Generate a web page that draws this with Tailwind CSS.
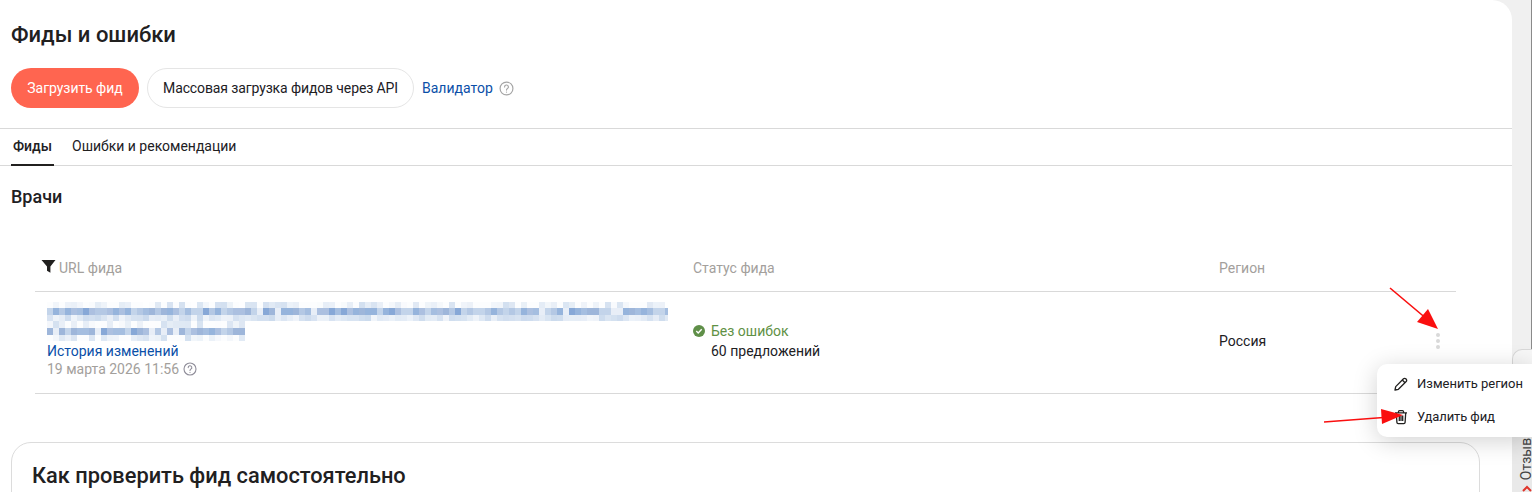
<!DOCTYPE html>
<html lang="ru">
<head>
<meta charset="utf-8">
<script src="https://cdn.jsdelivr.net/npm/@tailwindcss/browser@4"></script>
</head>
<body class="m-0 overflow-hidden bg-[#f0f0f0]">
<div class="relative flex h-[492px] w-[1532px] overflow-hidden font-['Roboto','Noto_Sans',sans-serif] text-[#21201f]">
  <main class="h-[492px] w-[1512px] shrink-0 rounded-tr-[20px] bg-white">
    <h1 class="pl-[11px] pt-[21px] text-[22px] font-medium leading-[27px]">Фиды и ошибки</h1>
    <div class="mt-[20px] flex h-[40px] items-center pl-[11px]">
      <button class="h-[40px] w-[128px] rounded-full bg-[#ff6550] text-[14px] tracking-[-0.05px] text-white">Загрузить фид</button>
      <button class="ml-[8px] h-[40px] w-[267px] rounded-full border border-[#e5e5e5] bg-white text-[14px] tracking-[-0.12px]">Массовая загрузка фидов через API</button>
      <a class="ml-[8px] text-[14px] text-[#0a4fa8]">Валидатор</a>
      <svg class="ml-[6px] h-[15px] w-[15px]" viewBox="0 0 14 14" fill="none" stroke="#a5a5a5" stroke-width="1.1"><circle cx="7" cy="7" r="6"/><path d="M5.2 5.6a1.8 1.8 0 1 1 2.7 1.5c-.6.4-.9.7-.9 1.4" stroke-linecap="round"/><circle cx="7" cy="10.3" r=".6" fill="#a5a5a5" stroke="none"/></svg>
    </div>
    <div class="mt-[20px] flex h-[38px] border-y border-[#d9d9d9] pl-[11px] text-[14px]">
      <div class="flex h-[37px] w-[43px] items-center justify-center border-b-2 border-[#21201f] pb-[1px] font-medium">Фиды</div>
      <div class="ml-[18px] flex h-[35px] items-center">Ошибки и рекомендации</div>
    </div>
    <h2 class="pl-[11px] pt-[19px] text-[18px] font-medium leading-[24px]">Врачи</h2>
    <section class="ml-[35px] mt-[34px] w-[1421px]">
      <div class="flex h-[49px] items-center border-b border-[#d9d9d9] pt-[2px] text-[14px] text-[#a3a09c]">
        <div class="flex w-[658px] items-center pl-[6px]">
          <svg class="mb-[4px] mr-[3px] h-[15px] w-[15px]" viewBox="0 0 15 15" fill="#21201f"><path d="M0.5 1h14L9.4 7.6v6.2L6 11.8V7.6z"/></svg>
          URL фида
        </div>
        <div class="w-[526px]">Статус фида</div>
        <div>Регион</div>
      </div>
      <div class="flex h-[102px] items-start border-b border-[#d9d9d9] text-[14px]">
        <div class="w-[658px] pl-[12px] pt-[10px]">
          <svg id="blur" class="block h-[40px] w-[621px]" viewBox="0 0 621 40" shape-rendering="crispEdges"></svg>
          <a class="block leading-[18px] text-[#0a4fa8]">История изменений</a>
          <div class="flex items-center leading-[18px] text-[#a3a09c]">19 марта 2026 11:56
            <svg class="ml-[4px] h-[14px] w-[14px]" viewBox="0 0 14 14" fill="none" stroke="#8f8d99" stroke-width="1.1"><circle cx="7" cy="7" r="6"/><path d="M5.2 5.6a1.8 1.8 0 1 1 2.7 1.5c-.6.4-.9.7-.9 1.4" stroke-linecap="round"/><circle cx="7" cy="10.3" r=".6" fill="#8f8d99" stroke="none"/></svg>
          </div>
        </div>
        <div class="w-[526px] pt-[29px] leading-[20px]">
          <div class="flex items-center text-[#5f9145]">
            <svg class="mr-[6px] h-[12px] w-[12px]" viewBox="0 0 12 12"><circle cx="6" cy="6" r="6" fill="#5f8f48"/><path d="M3.3 6.1l1.9 1.9 3.5-3.7" fill="none" stroke="#fff" stroke-width="1.4"/></svg>
            Без ошибок
          </div>
          <div class="pl-[18px]">60 предложений</div>
        </div>
        <div class="w-[217px] pt-[39px] leading-[20px]">Россия</div>
        <div class="flex flex-col gap-[2px] pt-[41px]">
          <span class="h-[4px] w-[4px] rounded-full bg-[#d9d9d9]"></span>
          <span class="h-[4px] w-[4px] rounded-full bg-[#d9d9d9]"></span>
          <span class="h-[4px] w-[4px] rounded-full bg-[#d9d9d9]"></span>
        </div>
      </div>
    </section>
    <section class="ml-[11px] mt-[48px] h-[80px] w-[1469px] rounded-t-[20px] border border-[#dcdcdc] px-[20px] pt-[19px]">
      <h3 class="text-[21.8px] font-medium leading-[28px]">Как проверить фид самостоятельно</h3>
    </section>
  </main>
  <aside class="relative w-[20px] border-r border-[#8a8a8a]">
    <div class="absolute left-0 top-[349px] h-[30px] w-[20px] rounded-tl-[10px] border-l border-t border-[#d8d8d8] bg-[#f7f7f7]"></div>
    <div class="absolute bottom-0 left-0 flex h-[120px] w-[20px] items-end justify-end bg-[#e9e9e9]">
      <span class="mb-[12px] whitespace-nowrap text-[14px] leading-[12px] text-[#444] [writing-mode:vertical-rl] rotate-180">Отзыв с</span>
    </div>
    <svg class="absolute bottom-0 left-[9px] h-[9px] w-[12px]" viewBox="0 0 12 9" fill="none" stroke="#e0352b" stroke-width="2"><path d="M2 8l4-4 4 4"/></svg>
  </aside>
  <div class="absolute left-[1377px] top-[364px] h-[73px] w-[155px] rounded-l-[10px] bg-white py-[3px] text-[13px] shadow-[0_4px_24px_rgba(0,0,0,0.18)]">
    <div class="flex h-[33px] items-center pl-[16px]">
      <svg class="mr-[8px] h-[16px] w-[16px]" viewBox="0 0 16 16" fill="none" stroke="#21201f" stroke-width="1.3" stroke-linejoin="round"><path d="M2 14l.7-3.4 7.8-7.8a1.6 1.6 0 0 1 2.3 0l.4.4a1.6 1.6 0 0 1 0 2.3l-7.8 7.8z"/><path d="M9.3 4l2.7 2.7"/></svg>
      Изменить регион
    </div>
    <div class="flex h-[33px] items-center pl-[16px]">
      <svg class="mr-[8px] h-[16px] w-[16px]" viewBox="0 0 16 16" fill="none" stroke="#21201f" stroke-width="1.3" stroke-linejoin="round"><path d="M2 3.8h12M5.5 3.8V2.6a1 1 0 0 1 1-1h3a1 1 0 0 1 1 1v1.2M3.3 3.8l.6 9.6a1.3 1.3 0 0 0 1.3 1.2h5.6a1.3 1.3 0 0 0 1.3-1.2l.6-9.6M6.3 6.5v5.5M8 6.5v5.5M9.7 6.5v5.5"/></svg>
      <span class="tracking-[-0.1px]">Удалить фид</span>
    </div>
  </div>
  <svg class="pointer-events-none absolute left-0 top-0 h-[492px] w-[1532px]" viewBox="0 0 1532 492">
    <path d="M1390 288L1428 320" stroke="#fa0f0f" stroke-width="1.6"/>
    <path d="M1438 329L1417 322L1428 309z" fill="#fa0f0f"/>
    <path d="M1324 422L1390 417" stroke="#fa0f0f" stroke-width="1.6"/>
    <path d="M1403 415L1381 409L1382 424z" fill="#fa0f0f"/>
  </svg>
</div>
<script>
(function(){
  var svg=document.getElementById('blur'),s=11;
  function r(){s=(s*16807)%2147483647;return s/2147483647;}
  function mix(a,b,t){return a.map(function(v,i){return Math.round(v+(b[i]-v)*t);});}
  var dark=[[150,180,220],[165,190,224],[135,168,215],[180,200,228],[158,182,218],[195,212,234],[172,192,224]];
  var w=[255,255,255],mid=[200,216,236];
  function row(y,h,n,kind){
    for(var i=0;i<n;i++){
      var c;
      if(kind===2){c=dark[Math.floor(r()*dark.length)];if(r()<.07)c=[232,238,247];}
      else if(kind===1){c=mix(w,mid,.25+r()*.7);}
      else{c=mix(w,mid,r()<.35?0.05:r()*.8);}
      var e=document.createElementNS('http://www.w3.org/2000/svg','rect');
      e.setAttribute('x',i*6);e.setAttribute('y',y);e.setAttribute('width',6);e.setAttribute('height',h);
      e.setAttribute('fill','rgb('+c.join(',')+')');svg.appendChild(e);
    }
  }
  row(0,6,104,0);row(6,7,104,2);row(13,6,104,1);row(19,7,33,0);row(26,7,33,2);row(33,6,33,0);
})();
</script>
</body>
</html>
